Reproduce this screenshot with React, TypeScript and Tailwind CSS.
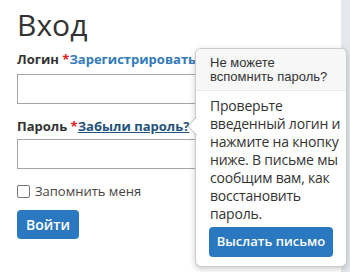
import React from "react";

const LoginForm = () => {
  return (
    <div className="flex-1 pl-[17px]">
      <h1 className="mt-[7px] text-[30px] font-normal leading-[36px] text-[#333]">
        Вход
      </h1>
      <div className="mt-[7px] whitespace-nowrap text-[13px] font-bold leading-[18px] text-[#333]">
        Логин <span className="text-[#e21b1b]">*</span>
        <a className="text-[#337ab7]">Зарегистрироваться</a>
      </div>
      <div className="mt-[6px] h-[30px] w-[310px] border border-[#a6a6a6] bg-white" />
      <div className="mt-[13px] whitespace-nowrap text-[13px] font-bold leading-[18px] text-[#333]">
        Пароль <span className="text-[#e21b1b]">*</span>
        <a className="text-[#23527c] underline">Забыли пароль?</a>
      </div>
      <div className="mt-[4px] h-[30px] w-[310px] border border-[#a6a6a6] bg-white" />
      <label className="mt-[13px] flex h-[18px] items-center text-[13px] leading-[18px] text-[#444]">
        <span className="h-[13px] w-[13px] rounded-[2px] border border-[#767676] bg-white" />
        <span className="ml-[5px]">Запомнить меня</span>
      </label>
      <button className="mt-[10px] flex h-[29px] w-[62px] items-center justify-center rounded-[4px] bg-[#2a79c0] text-[14px] font-semibold text-white">
        Войти
      </button>
    </div>
  );
};

const ForgotPopover = () => {
  return (
    <div className="absolute left-[195px] top-[48px] w-[152px]">
      <div className="h-[219px] rounded-[6px] border border-[rgba(0,0,0,0.2)] bg-white shadow-[0_2px_6px_rgba(0,0,0,0.2)]">
        <div className="rounded-t-[5px] border-b border-[#ebebeb] bg-[#f7f7f7] px-[14px] pb-[6px] pt-[7px] font-['Liberation_Sans',Arial,sans-serif] text-[13px] leading-[14px] text-[#333]">
          Не можете вспомнить пароль?
        </div>
        <div className="px-[13px] pb-[9px] pt-[6px]">
          <p className="whitespace-nowrap px-[1px] text-[14px] leading-[18px] tracking-[-0.2px] text-[#333]">
            Проверьте
            <br />
            введенный логин и
            <br />
            нажмите на кнопку
            <br />
            ниже. В письме мы
            <br />
            сообщим вам, как
            <br />
            восстановить
            <br />
            пароль.
          </p>
          <button className="mt-[4px] flex h-[30px] w-full items-center justify-center rounded-[4px] bg-[#2a79c0] text-[13px] font-semibold text-white">
            Выслать письмо
          </button>
        </div>
      </div>
      <svg
        className="absolute left-[-8px] top-[69px]"
        width="10"
        height="18"
        viewBox="0 0 10 18"
      >
        <polygon points="9.5,0 0.7,9 9.5,18" fill="#fff" />
        <polyline
          points="9.5,0 0.7,9 9.5,18"
          fill="none"
          stroke="rgba(0,0,0,0.25)"
          strokeWidth="1"
        />
      </svg>
    </div>
  );
};

export default function App() {
  return (
    <div className="relative flex h-[272px] w-[350px] overflow-hidden bg-white font-['Open_Sans',sans-serif]">
      <LoginForm />
      <div className="w-[9px] bg-[#e4e8ec]" />
      <ForgotPopover />
    </div>
  );
}
